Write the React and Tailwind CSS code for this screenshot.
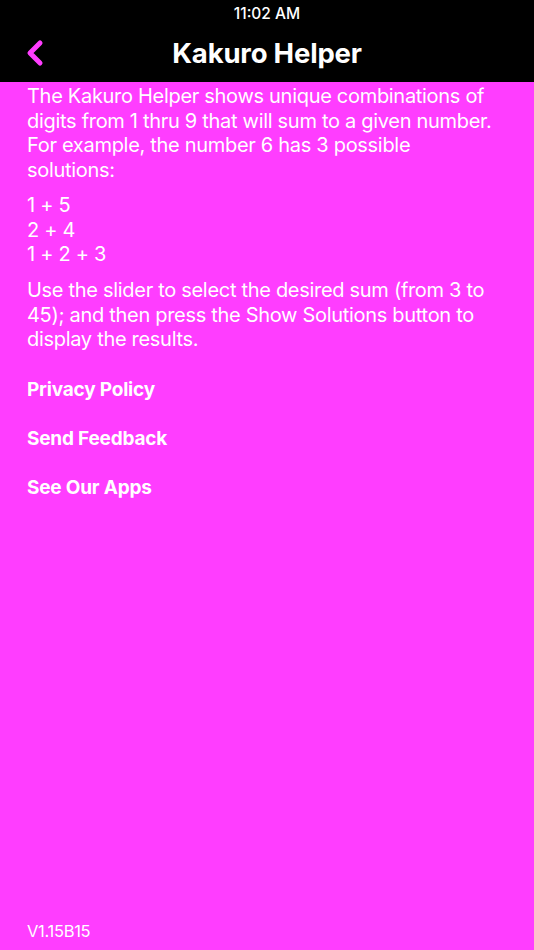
import { ChevronLeft } from 'lucide-react';

const links = ['Privacy Policy', 'Send Feedback', 'See Our Apps'];

const App = () => {
    return (
        <div
            className="h-[950px] w-[534px] flex flex-col bg-[#ff3dff] text-white overflow-hidden"
            style={{ fontFamily: 'Inter, "Noto Sans", sans-serif' }}
        >
            <div className="bg-black h-[82px] shrink-0 flex flex-col">
                <div className="h-[27px] flex items-center justify-center text-[15.5px] font-medium">11:02 AM</div>
                <div className="relative flex-1 flex items-center justify-center">
                    <ChevronLeft size={40} strokeWidth={3} className="absolute left-[15px] top-[6px] text-[#ff3dff]" />
                    <h1 className="text-[27.5px] font-bold tracking-[-0.2px] -mt-[1px]">Kakuro Helper</h1>
                </div>
            </div>

            <div className="flex-1 flex flex-col px-[27px] pt-[2px] pb-[9px] text-[20px] leading-[24.5px] tracking-[-0.3px]">
                <p>
                    The Kakuro Helper shows unique combinations of
                    <br />
                    digits from 1 thru 9 that will sum to a given number.
                    <br />
                    For example, the number 6 has 3 possible
                    <br />
                    solutions:
                </p>
                <div className="mt-[11px]">
                    <div>1 + 5</div>
                    <div>2 + 4</div>
                    <div>1 + 2 + 3</div>
                </div>
                <p className="mt-[11.5px]">
                    Use the slider to select the desired sum (from 3 to
                    <br />
                    45); and then press the Show Solutions button to
                    <br />
                    display the results.
                </p>

                <div className="mt-[14px] flex flex-col">
                    {links.map((l) => (
                        <a key={l} href="#" className="h-[49px] flex items-center font-bold text-[19px] tracking-[-0.2px]">
                            {l}
                        </a>
                    ))}
                </div>

                <div className="mt-auto text-[16.5px] leading-[20px]">V1.15B15</div>
            </div>
        </div>
    );
};

export default App;
